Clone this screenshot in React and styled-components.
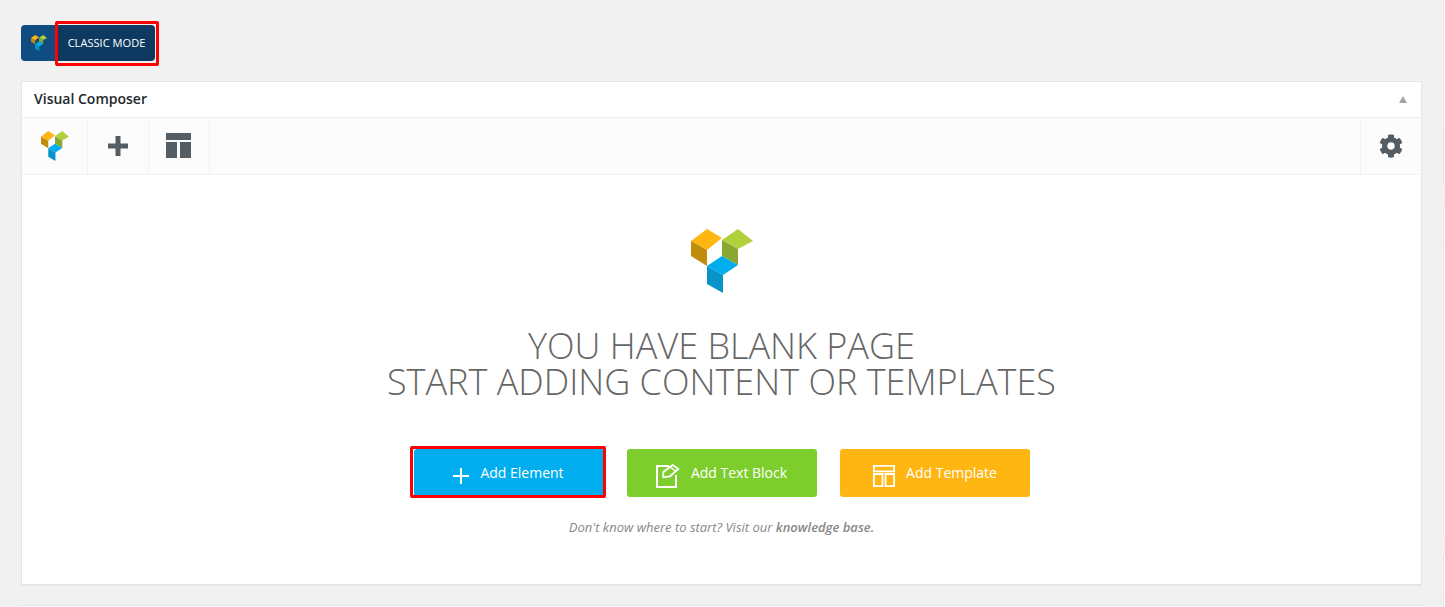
import React from "react";
import styled, { createGlobalStyle } from "styled-components";
import { FaCog } from "react-icons/fa";

const Global = createGlobalStyle`
  html, body { margin: 0; padding: 0; background: #f1f1f1; height: 100%; overflow: hidden; }
  body { font-family: "Open Sans", "Liberation Sans", sans-serif; color: #32373c; }
  *, *::before, *::after { box-sizing: border-box; }
`;

const Page = styled.div`
  width: 1445px;
  height: 607px;
  overflow: hidden;
  display: flex;
  padding: 0 0 0 21px;
`;

const Main = styled.main`
  width: 1401px;
  flex: none;
  padding-top: 25px;
`;

const ModeBar = styled.div`
  display: flex;
  height: 36px;
  margin-bottom: 20px;
`;

const LogoTab = styled.div`
  width: 36px;
  height: 36px;
  background: #0f4c81;
  border-radius: 4px 0 0 4px;
  display: flex;
  align-items: center;
  justify-content: center;
`;

const ClassicButton = styled.button`
  width: 98px;
  height: 36px;
  padding: 0 0 0 1px;
  border: 0;
  background: #0e3a61;
  color: #fff;
  border-radius: 0 4px 4px 0;
  font: 400 11.1px/36px "Open Sans", sans-serif;
  position: relative;
  &::after {
    content: "";
    position: absolute;
    left: -2px;
    top: -4px;
    width: 104px;
    height: 45px;
    border: 3px solid #f00;
    border-radius: 2px;
  }
`;

const Panel = styled.section`
  height: 504px;
  background: #fff;
  border: 1px solid #e5e5e5;
  box-shadow: 0 1px 1px rgba(0, 0, 0, 0.04);
  display: flex;
  flex-direction: column;
`;

const PanelHeader = styled.header`
  height: 36px;
  flex: none;
  display: flex;
  align-items: center;
  justify-content: space-between;
  padding: 0 14px 0 12px;
  border-bottom: 1px solid #eee;
  font-size: 14px;
  font-weight: 600;
  color: #23282d;
`;

const PanelTitle = styled.span`
  margin-top: -2px;
`;

const Caret = styled.span`
  width: 0;
  height: 0;
  border-left: 4.5px solid transparent;
  border-right: 4.5px solid transparent;
  border-bottom: 7px solid #a0a5aa;
`;

const Toolbar = styled.div`
  height: 57px;
  flex: none;
  display: flex;
  background: #fcfcfc;
  border-bottom: 1px solid #f1f1f1;
`;

const ToolCell = styled.div`
  width: ${(p) => p.$w || 61}px;
  display: flex;
  align-items: center;
  justify-content: center;
  padding: ${(p) => (p.$w ? "0 0 1px 1px" : "0 1px 1px 0")};
  border-right: ${(p) => (p.$end ? "0" : "1px solid #f1f1f1")};
  border-left: ${(p) => (p.$end ? "1px solid #f1f1f1" : "0")};
  margin-left: ${(p) => (p.$end ? "auto" : "0")};
`;

const Body = styled.div`
  flex: 1;
  display: flex;
  flex-direction: column;
  align-items: center;
  padding-top: 54px;
`;

const Heading = styled.h2`
  margin: 35px 0 0;
  font-weight: 300;
  font-size: 36px;
  line-height: 36px;
  color: #666;
  text-align: center;
  text-transform: uppercase;
`;

const Actions = styled.div`
  display: flex;
  gap: 23px;
  margin-top: 49px;
`;

const Action = styled.button`
  width: 190px;
  height: 48px;
  border: 0;
  padding: 0 0 0 ${(p) => p.$inset || 0}px;
  border-radius: 3px;
  background: ${(p) => p.$bg};
  color: #fff;
  font: 400 14px "Open Sans", sans-serif;
  display: flex;
  align-items: center;
  justify-content: center;
  gap: 11px;
  position: relative;
  & > svg {
    margin-top: 5px;
  }
  ${(p) =>
    p.$marked &&
    `&::after {
      content: "";
      position: absolute;
      inset: -3px -2px -1px -4px;
      border: 3px solid #f00;
      border-radius: 2px;
    }`}
`;

const ActionLabel = styled.span`
  margin-top: -2px;
`;

const Hint = styled.p`
  margin: 22px 0 0;
  font-size: 13px;
  font-style: italic;
  color: #888;
  line-height: 17px;
  b { font-weight: 600; }
`;

const NextPanel = styled.div`
  height: 10px;
  margin-top: 20px;
  background: #fff;
  border: 1px solid #e5e5e5;
`;

const SideColumn = styled.aside`
  width: 2px;
  flex: none;
  margin-left: 21px;
  height: 607px;
  display: flex;
  flex-direction: column;
`;

const SideBlock = styled.div`
  height: ${(p) => p.$h}px;
  margin-top: ${(p) => p.$gap || 0}px;
  flex: none;
  background: ${(p) => p.$bg || "#fff"};
  border-left: 1px solid #e5e5e5;
  ${(p) => p.$top && "border-top: 1px solid #e5e5e5;"}
`;

const Cube = ({ w = 62, h = 64 }) => (
  <svg width={w} height={h} viewBox="0 0 62 64" preserveAspectRatio="none" aria-hidden="true">
    <polygon points="0,12 16,0 31,9 16,21" fill="#ffb612" />
    <polygon points="0,12 16,21 16,37 0,27" fill="#c08c0c" />
    <polygon points="31,11 47,0 62,12 47,20" fill="#b0d13c" />
    <polygon points="31,11 47,20 47,36 31,27" fill="#88a832" />
    <polygon points="16,37 31,27 47,36 32,46" fill="#00aeef" />
    <polygon points="16,37 32,46 32,64 16,55" fill="#0795c9" />
  </svg>
);

const PlusBold = () => (
  <svg width="20" height="20" viewBox="0 0 20 20" aria-hidden="true">
    <path d="M7.5 0h5v7.5H20v5h-7.5V20h-5v-7.5H0v-5h7.5z" fill="#545c64" />
  </svg>
);

const LayoutBold = () => (
  <svg width="25" height="25" viewBox="0 0 25 25" aria-hidden="true">
    <path d="M0 0h25v7H0zM0 9h11v16H0zM14 9h11v16H14z" fill="#545c64" />
  </svg>
);

const PlusThin = () => (
  <svg width="16" height="16" viewBox="0 0 16 16" aria-hidden="true">
    <path d="M7 0h2v7h7v2H9v7H7V9H0V7h7z" fill="#fff" />
  </svg>
);

const NoteEdit = () => (
  <svg width="24" height="24" viewBox="0 0 24 24" fill="none" stroke="#fff" strokeWidth="2" aria-hidden="true">
    <path d="M13 2H1v21h19V11" />
    <path d="M7.3 8 16.7 1l5.6 4L14 12.3 7.3 13.3z" strokeWidth="1.8" />
    <path d="M14 3l6 4.5" strokeWidth="1.4" />
  </svg>
);

const TemplateIcon = () => (
  <svg width="22" height="22" viewBox="0 0 22 22" fill="none" stroke="#fff" strokeWidth="1.8" aria-hidden="true">
    <path d="M.9.9h20.2v5.4H.9zM.9 9h8.6v12.1H.9zM12.5 9h8.6v12.1h-8.6z" />
  </svg>
);

export default function App() {
  return (
    <Page>
      <Global />
      <Main>
        <ModeBar>
          <LogoTab>
            <Cube w={16} h={16} />
          </LogoTab>
          <ClassicButton>CLASSIC MODE</ClassicButton>
        </ModeBar>
        <Panel>
          <PanelHeader>
            <PanelTitle>Visual Composer</PanelTitle>
            <Caret />
          </PanelHeader>
          <Toolbar>
            <ToolCell $w={66}>
              <Cube w={28} h={30} />
            </ToolCell>
            <ToolCell><PlusBold /></ToolCell>
            <ToolCell><LayoutBold /></ToolCell>
            <ToolCell $end><FaCog size={24} color="#545c64" /></ToolCell>
          </Toolbar>
          <Body>
            <Cube />
            <Heading>
              You have blank page
              <br />
              Start adding content or templates
            </Heading>
            <Actions>
              <Action $bg="#00aeef" $marked>
                <PlusThin />
                <ActionLabel>Add Element</ActionLabel>
              </Action>
              <Action $bg="#7dce2c">
                <NoteEdit />
                <ActionLabel>Add Text Block</ActionLabel>
              </Action>
              <Action $bg="#ffb612" $inset={1}>
                <TemplateIcon />
                <ActionLabel>Add Template</ActionLabel>
              </Action>
            </Actions>
            <Hint>
              Don't know where to start? Visit our <b>knowledge base.</b>
            </Hint>
          </Body>
        </Panel>
        <NextPanel />
      </Main>
      <SideColumn>
        <SideBlock $h={133} />
        <SideBlock $h={51} $bg="#f9f9f9" $top />
        <SideBlock $h={37} $gap={21} $top />
        <SideBlock $h={292} $top />
        <SideBlock $h={37} $gap={21} $top />
        <SideBlock $h={15} $top />
      </SideColumn>
    </Page>
  );
}
